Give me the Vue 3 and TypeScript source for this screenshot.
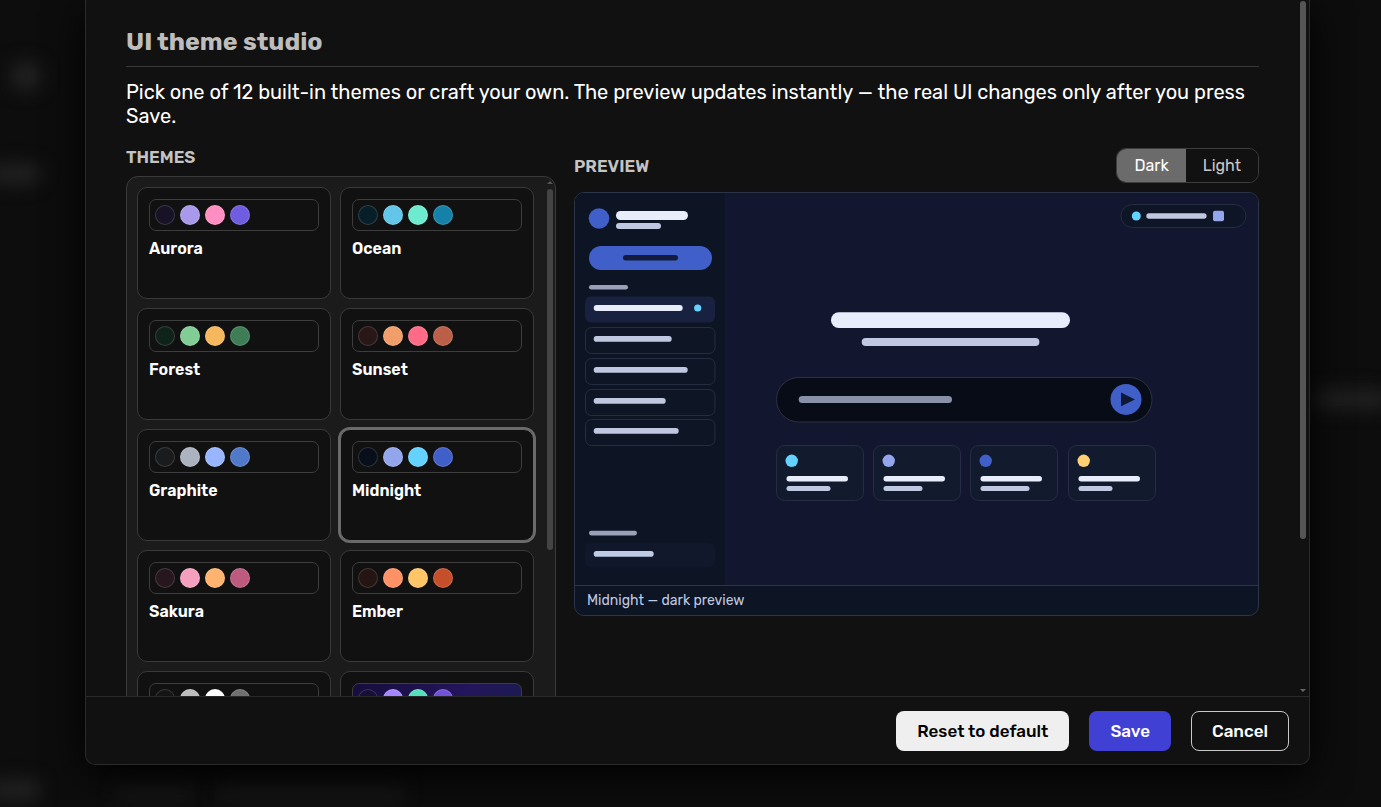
<script setup lang="ts">
import { ref, computed } from 'vue'

interface Theme {
  name: string
  colors: string[]
  gradient?: boolean
}

const themes: Theme[] = [
  { name: 'Aurora', colors: ['#171226', '#a899eb', '#ff8fc2', '#705ce0'] },
  { name: 'Ocean', colors: ['#081f2a', '#63c5e8', '#6eebcf', '#1681a8'] },
  { name: 'Forest', colors: ['#0f231a', '#82cc96', '#f5b85e', '#3f7d57'] },
  { name: 'Sunset', colors: ['#281716', '#f29e6b', '#ff6b87', '#bc5f49'] },
  { name: 'Graphite', colors: ['#191b1d', '#abb2c0', '#9ab5ff', '#5179c9'] },
  { name: 'Midnight', colors: ['#080e1a', '#93a5eb', '#63d2ff', '#405fc8'] },
  { name: 'Sakura', colors: ['#28161f', '#f59fbe', '#ffb370', '#bd5a7e'] },
  { name: 'Ember', colors: ['#241412', '#ff9166', '#ffc566', '#c64f2b'] },
  { name: '', colors: ['#141414', '#bdbdbd', '#ffffff', '#707070'] },
  { name: '', colors: ['#170f38', '#a586ff', '#55dfbd', '#7252d9'], gradient: true },
]

const selected = ref(5)
const mode = ref<'dark' | 'light'>('dark')
const caption = computed(() => `${themes[selected.value].name} — ${mode.value} preview`)

const navItems = [
  { y: 134, width: 78 },
  { y: 165, width: 94 },
  { y: 196, width: 72 },
  { y: 226, width: 85 },
]
const tiles = [
  { x: 201, color: '#63d2ff', width: 44 },
  { x: 298, color: '#93a5eb', width: 39 },
  { x: 395, color: '#405fc8', width: 49 },
  { x: 493, color: '#ffcf73', width: 34 },
]
</script>

<template>
  <div class="page">
    <div class="ghosts" aria-hidden="true">
      <i class="ghost g1"></i><i class="ghost g2"></i><i class="ghost g3"></i>
      <i class="ghost g4"></i><i class="ghost g5"></i><i class="ghost g6"></i>
    </div>

    <section class="dialog" role="dialog" aria-labelledby="studio-title">
      <div class="scroll">
        <h2 id="studio-title" class="title">UI theme studio</h2>
        <p class="intro">
          Pick one of 12 built-in themes or craft your own. The preview updates instantly — the real UI
          changes only after you press Save.
        </p>

        <div class="columns">
          <div class="themes">
            <h3 class="heading">THEMES</h3>
            <div class="list-frame">
              <div class="list">
                <button
                  v-for="(t, i) in themes"
                  :key="i"
                  type="button"
                  class="card"
                  :class="{ active: i === selected }"
                  :aria-pressed="i === selected"
                  @click="selected = i"
                >
                  <span class="swatches" :class="{ gradient: t.gradient }">
                    <span
                      v-for="c in t.colors"
                      :key="c"
                      class="dot"
                      :style="{ backgroundColor: c }"
                    ></span>
                  </span>
                  <span v-if="t.name" class="name">{{ t.name }}</span>
                </button>
              </div>
              <span class="arrow-up"></span>
              <span class="list-thumb"></span>
            </div>
          </div>

          <div class="preview">
            <div class="preview-head">
              <h3 class="heading">PREVIEW</h3>
              <div class="toggle" role="group" aria-label="Preview mode">
                <button type="button" :class="{ on: mode === 'dark' }" @click="mode = 'dark'">Dark</button>
                <button type="button" :class="{ on: mode === 'light' }" @click="mode = 'light'">Light</button>
              </div>
            </div>

            <figure class="frame">
              <svg class="mock" viewBox="0 0 683 392" aria-hidden="true">
                <rect width="683" height="392" fill="#12162f" />
                <rect width="150" height="392" fill="#0d1423" />

                <circle cx="24" cy="25.5" r="10.3" fill="#405fc8" />
                <rect x="41" y="18" width="72" height="9" rx="4.5" fill="#e8edfb" />
                <rect x="41" y="30" width="45" height="6" rx="3" fill="#bfc8e0" />

                <rect x="14" y="53" width="123" height="24" rx="12" fill="#405fc8" />
                <rect x="48" y="62" width="55" height="5.5" rx="2.7" fill="#131c3d" />

                <rect x="14" y="92" width="39" height="4.5" rx="2.2" fill="#98a1b7" />
                <rect x="10" y="103.5" width="130" height="26" rx="6" fill="#182140" />
                <rect x="18.7" y="112" width="89" height="6" rx="3" fill="#e8edfb" />
                <circle cx="122.7" cy="115" r="3.6" fill="#63d2ff" />

                <g v-for="n in navItems" :key="n.y">
                  <rect x="10.5" :y="n.y + 0.5" width="129.5" height="26" rx="6" fill="#0e1525" stroke="#252e40" />
                  <rect x="18.7" :y="n.y + 9" :width="n.width" height="5.7" rx="2.8" fill="#bfc8e0" />
                </g>

                <rect x="14" y="337.7" width="48" height="4.7" rx="2.3" fill="#98a1b7" />
                <rect x="10" y="350" width="130" height="24" rx="6" fill="#11182b" />
                <rect x="18.7" y="358" width="60" height="5.7" rx="2.8" fill="#bfcbe4" />

                <rect x="546" y="11.5" width="125" height="23" rx="11.5" fill="#0d1526" stroke="#242d42" />
                <circle cx="561.3" cy="23" r="4.5" fill="#63d2ff" />
                <rect x="571.3" y="20.3" width="60.3" height="5.5" rx="2.7" fill="#bfc8e0" />
                <rect x="638" y="17.7" width="11" height="10.5" rx="2" fill="#93a5eb" />

                <rect x="256" y="119.3" width="239" height="15.7" rx="7.8" fill="#e8edfb" />
                <rect x="286.7" y="145" width="177.7" height="8" rx="4" fill="#bfc8e0" />

                <rect x="201.5" y="184.5" width="375.5" height="44.5" rx="22.2" fill="#070c17" stroke="#2c3144" />
                <rect x="223.7" y="203" width="153.3" height="7" rx="3.5" fill="#8a90a8" />
                <circle cx="551" cy="206.4" r="15.5" fill="#405fc8" />
                <path d="M546 199.6 L560 206.4 L546 213.3 Z" fill="#0d1936" />

                <g v-for="t in tiles" :key="t.x">
                  <rect :x="t.x + 0.5" y="252.5" width="87" height="55" rx="8" fill="#121a2e" stroke="#262d42" />
                  <circle :cx="t.x + 15.7" cy="267.8" r="6.2" :fill="t.color" />
                  <rect :x="t.x + 10.5" y="283" width="61.5" height="5.5" rx="2.7" fill="#e8edfb" />
                  <rect :x="t.x + 10.5" y="293" :width="t.width" height="5" rx="2.5" fill="#bfc8e0" />
                </g>
              </svg>
              <figcaption class="caption">{{ caption }}</figcaption>
            </figure>
          </div>
        </div>
      </div>
      <span class="body-thumb"></span>
      <footer class="footer">
        <span class="arrow-down"></span>
        <button type="button" class="btn reset">Reset to default</button>
        <button type="button" class="btn save">Save</button>
        <button type="button" class="btn cancel">Cancel</button>
      </footer>
    </section>
  </div>
</template>

<style>
body {
  background: #0d0d0d;
  overflow: hidden;
}
</style>

<style scoped>
* {
  box-sizing: border-box;
}
.page {
  position: relative;
  height: 100vh;
  padding: 0 71px 42px 85px;
  overflow: hidden;
  background: #0d0d0d;
  color: #fff;
  font-family: Rubik, Roboto, 'Liberation Sans', sans-serif;
}
.ghost {
  position: absolute;
  border-radius: 8px;
  background: #222;
  filter: blur(9px);
}
.g1 { left: 12px; top: 62px; width: 28px; height: 28px; }
.g2 { left: -10px; top: 164px; width: 50px; height: 20px; }
.g3 { right: -10px; top: 390px; width: 80px; height: 18px; }
.g4 { left: -10px; top: 780px; width: 50px; height: 20px; }
.g5 { left: 115px; top: 786px; width: 80px; height: 14px; background: #1a1a1a; }
.g6 { left: 215px; top: 786px; width: 190px; height: 14px; background: #1a1a1a; }

.dialog {
  position: relative;
  display: flex;
  flex-direction: column;
  height: 100%;
  background: #111;
  border: 1px solid #2a2a2a;
  border-top: 0;
  border-radius: 0 0 10px 10px;
  box-shadow: 0 10px 40px #000;
}
.scroll {
  flex: 1;
  min-height: 0;
  overflow: hidden;
  padding: 28px 50px 0 40px;
}
.title {
  margin: 0;
  padding-bottom: 10px;
  border-bottom: 1px solid #393939;
  color: #bdbdbd;
  font-size: 25px;
  font-weight: 700;
  line-height: 28px;
}
.intro {
  margin: 13px 0 19px;
  font-size: 20px;
  line-height: 24px;
}
.columns {
  display: grid;
  grid-template-columns: minmax(0, 430px) minmax(0, 1fr);
  gap: 18px;
}
.heading {
  margin: 0;
  color: #c4c4c4;
  font-size: 17px;
  font-weight: 600;
  line-height: 20px;
}
.themes .heading {
  margin-bottom: 9px;
}
.list-frame {
  position: relative;
}
.list {
  display: grid;
  grid-template-columns: 1fr 1fr;
  grid-auto-rows: 112px;
  gap: 9px;
  height: 630px;
  padding: 10px 21px 10px 10px;
  overflow: hidden;
  background: #1b1b1b;
  border: 1px solid #3a3a3a;
  border-radius: 12px;
}
.card {
  display: flex;
  flex-direction: column;
  gap: 8px;
  padding: 11px;
  background: #111;
  border: 1px solid #3a3a3a;
  border-radius: 10px;
  color: #fff;
  font: inherit;
  text-align: left;
}
.card.active {
  border-color: #6b6b6b;
  box-shadow: 0 0 0 2px #6b6b6b;
}
.swatches {
  display: flex;
  gap: 5px;
  padding: 5px;
  border: 1px solid #3d3d3d;
  border-radius: 7px;
}
.swatches.gradient {
  background: linear-gradient(135deg, #160d3c, #24155c 60%, #181c4c);
}
.dot {
  width: 20px;
  height: 20px;
  border: 1px solid rgba(255, 255, 255, 0.15);
  border-radius: 50%;
}
.name {
  font-size: 16px;
  font-weight: 600;
  line-height: 20px;
}
.arrow-up {
  position: absolute;
  top: 5px;
  right: 3px;
  border: 3px solid transparent;
  border-top: 0;
  border-bottom-color: #555;
}
.list-thumb {
  position: absolute;
  top: 13px;
  right: 3px;
  width: 6px;
  height: 361px;
  border-radius: 3px;
  background: #444;
}
.body-thumb {
  position: absolute;
  top: 1px;
  right: 3px;
  width: 6px;
  height: 538px;
  border-radius: 3px;
  background: #555;
}
.preview-head {
  display: flex;
  align-items: center;
  justify-content: space-between;
  margin-top: 1px;
  margin-bottom: 9px;
}
.toggle {
  display: flex;
  overflow: hidden;
  border: 1px solid #3d3d3d;
  border-radius: 10px;
}
.toggle button {
  padding: 0 17px;
  border: 0;
  background: #111;
  color: #c8c8c8;
  font: inherit;
  font-size: 16px;
  line-height: 33px;
}
.toggle button.on {
  background: #6b6b6b;
  color: #fff;
}
.frame {
  margin: 0;
  overflow: hidden;
  border: 1px solid #2a3548;
  border-radius: 10px;
  background: #0d1423;
}
.mock {
  display: block;
  width: 100%;
}
.caption {
  padding: 0 12px;
  border-top: 1px solid #2a3548;
  color: #bfc8e0;
  font-size: 14px;
  line-height: 29px;
}
.footer {
  position: relative;
  display: flex;
  justify-content: flex-end;
  gap: 20px;
  padding: 14px 20px 13px;
  border-top: 1px solid #2a2a2a;
}
.arrow-down {
  position: absolute;
  top: -8px;
  right: 3px;
  border: 3px solid transparent;
  border-bottom: 0;
  border-top-color: #666;
}
.btn {
  height: 40px;
  padding: 0 20px;
  border: 1px solid transparent;
  border-radius: 8px;
  font: inherit;
  font-size: 17px;
  font-weight: 500;
}
.reset {
  background: #efefef;
  color: #000;
}
.save {
  background: #4040d4;
  color: #fff;
}
.cancel {
  background: #111;
  border-color: #c8c8c8;
  color: #fff;
}
</style>
